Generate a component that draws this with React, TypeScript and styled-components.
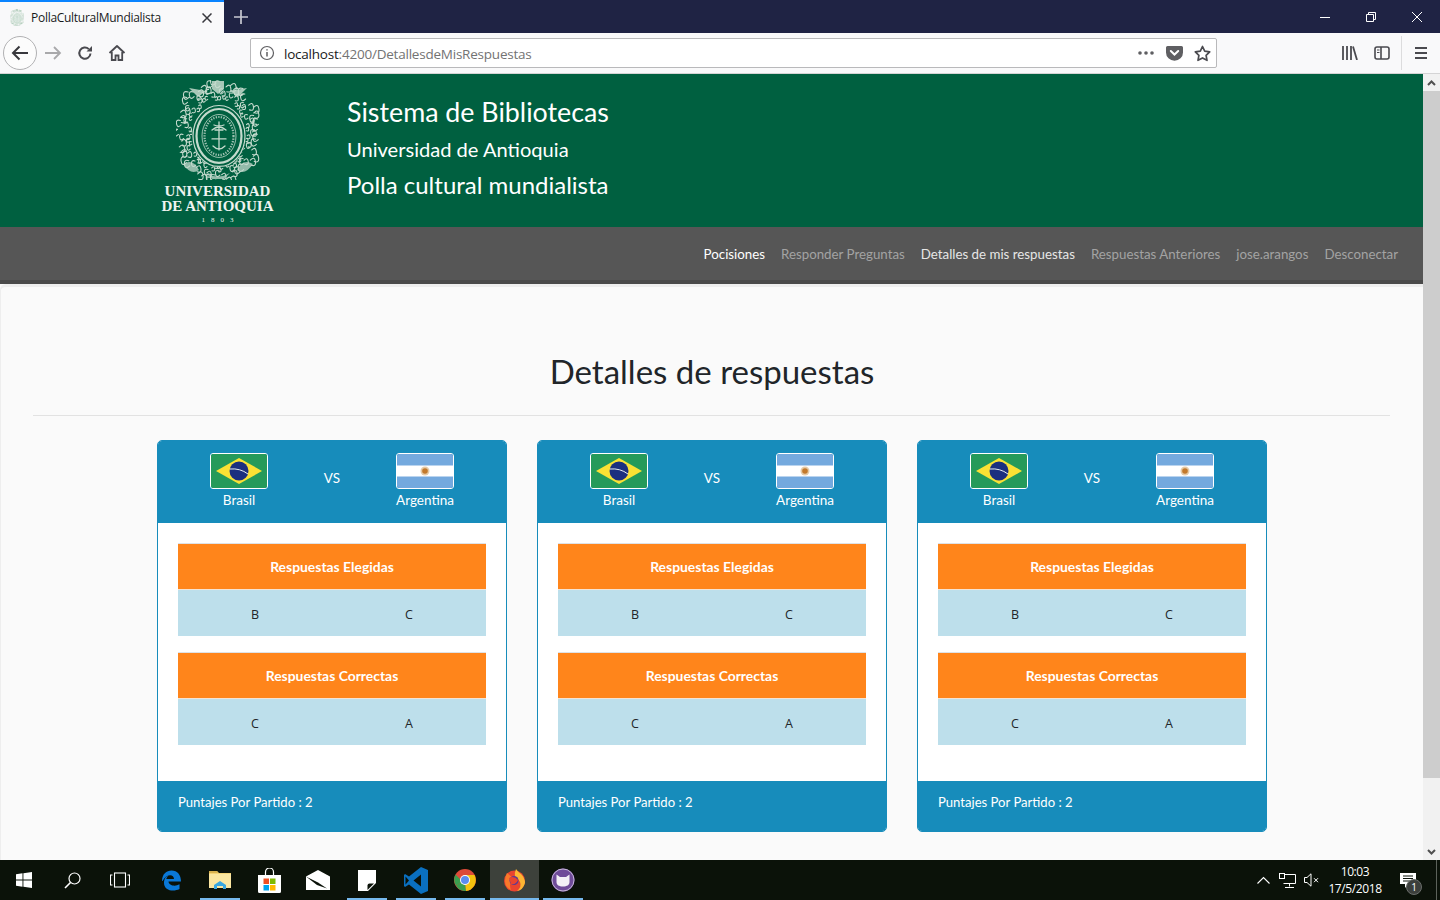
import styled, { createGlobalStyle } from 'styled-components';

const GlobalStyle = createGlobalStyle`
  html, body {
    margin: 0;
    padding: 0;
    height: 100%;
    overflow: hidden;
    background: #fafafa;
  }
  * {
    box-sizing: border-box;
  }
`;

const BODY_FONT = `Lato, "Open Sans", sans-serif`;
const UI_FONT = `"Open Sans", "Noto Sans", sans-serif`;

const Screen = styled.div`
  width: 1440px;
  height: 900px;
  display: flex;
  flex-direction: column;
  overflow: hidden;
`;

/* browser chrome */
const TabStrip = styled.div`
  height: 33px;
  flex: none;
  display: flex;
  background: #1f2344;
`;

const Tab = styled.div`
  width: 224px;
  display: flex;
  align-items: center;
  background: #f9f9fa;
  border-top: 2px solid #0a84ff;
  padding: 0 12px 0 10px;
  font: 12px ${UI_FONT};
  letter-spacing: -0.28px;
  color: #18191a;
`;

const TabTitle = styled.span`
  margin-left: 7px;
  flex: 1;
`;

const NewTab = styled.div`
  width: 34px;
  display: flex;
  align-items: center;
  justify-content: center;
  color: #c8c9d2;
`;

const WindowControls = styled.div`
  margin-left: auto;
  display: flex;
`;

const WindowButton = styled.div`
  width: 46px;
  display: flex;
  align-items: center;
  justify-content: center;
`;

const Toolbar = styled.div`
  height: 41px;
  flex: none;
  display: flex;
  align-items: center;
  padding: 0 3px;
  background: #f9f9fa;
  border-bottom: 1px solid #d4d4d5;
`;

const BackButton = styled.div`
  width: 34px;
  height: 34px;
  border-radius: 50%;
  border: 1px solid #b1b1b3;
  background: #fcfcfc;
  display: flex;
  align-items: center;
  justify-content: center;
`;

const ToolIcon = styled.div`
  width: 32px;
  height: 32px;
  flex: none;
  display: flex;
  align-items: center;
  justify-content: center;
`;

const UrlBar = styled.div`
  margin-left: 117px;
  width: 967px;
  height: 30px;
  display: flex;
  align-items: center;
  background: #fff;
  border: 1px solid #b9b9bb;
  border-radius: 2px;
`;

const UrlInfo = styled.div`
  width: 33px;
  padding-left: 8px;
  display: flex;
  align-items: center;
`;

const UrlText = styled.div`
  flex: 1;
  padding-top: 2px;
  font: 13.5px ${UI_FONT};
  letter-spacing: -0.22px;
  color: #737373;
`;

const UrlHost = styled.span`
  color: #18191a;
`;

const UrlAction = styled.div`
  width: 28px;
  display: flex;
  align-items: center;
  justify-content: center;
`;

const ToolbarRight = styled.div`
  margin-left: auto;
  display: flex;
  align-items: center;
`;

const ToolbarDivider = styled.div`
  width: 1px;
  height: 34px;
  margin: 0 3px;
  background: #dcdcdd;
`;

/* page */
const Viewport = styled.div`
  flex: 1;
  min-height: 0;
  display: flex;
`;

const Page = styled.div`
  flex: 1;
  min-width: 0;
  overflow: hidden;
  display: flex;
  flex-direction: column;
  font-family: ${BODY_FONT};
  background: #fafafa;
`;

const Scrollbar = styled.div`
  width: 17px;
  flex: none;
  display: flex;
  flex-direction: column;
  background: #f1f1f1;
`;

const ScrollArrow = styled.div`
  height: 17px;
  flex: none;
  display: flex;
  align-items: center;
  justify-content: center;
`;

const ScrollThumb = styled.div`
  height: 687px;
  background: #cdcdcd;
`;

const ScrollTrack = styled.div`
  flex: 1;
`;

const Header = styled.header`
  height: 153px;
  flex: none;
  display: flex;
  background: #006040;
  padding-left: 160px;
`;

const LogoBlock = styled.div`
  width: 115px;
  display: flex;
  flex-direction: column;
  align-items: center;
  padding-top: 6px;
  color: #eef4f0;
  font-family: "Liberation Serif", serif;
  font-weight: 700;
`;

const LogoSeal = styled.div`
  height: 104px;
  flex: none;
`;

const LogoLine = styled.div`
  font-size: 15px;
  line-height: 15px;
  white-space: nowrap;
`;

const LogoYear = styled.div`
  font-size: 7px;
  line-height: 13px;
  font-weight: 400;
  letter-spacing: 6px;
  margin-left: 6px;
`;

const HeaderText = styled.div`
  margin-left: 72px;
  padding-top: 20px;
  color: #fff;
`;

const HeaderTitle = styled.div`
  font-size: 26.8px;
  line-height: 37px;
`;

const HeaderSubtitle = styled.div`
  font-size: 20.1px;
  line-height: 36px;
`;

const HeaderApp = styled.div`
  font-size: 24px;
  line-height: 35px;
`;

const Nav = styled.nav`
  height: 57px;
  flex: none;
  display: flex;
  align-items: center;
  justify-content: flex-end;
  gap: 16px;
  padding: 1px 25px 0 0;
  background: #565656;
  border-bottom: 4px solid #4a4a4a;
  font-size: 13.3px;
`;

const NavLink = styled.a<{ $tone: 'on' | 'bright' | 'dim' }>`
  color: ${p => (p.$tone === 'on' ? '#ffffff' : p.$tone === 'bright' ? '#e6e6e6' : '#a3a3a3')};
  white-space: nowrap;
`;

const Content = styled.main`
  flex: 1;
  min-height: 0;
  border-top: 3px solid #eeeeee;
  border-left: 1px solid #eeeeee;
  border-radius: 6px 0 0 0;
`;

const Title = styled.h1`
  margin: 62px 0 22px;
  height: 44px;
  text-align: center;
  font-size: 33px;
  line-height: 44px;
  font-weight: 400;
  color: #212529;
`;

const Rule = styled.hr`
  margin: 0 33px 24px 32px;
  border: 0;
  border-top: 1px solid #e2e2e2;
`;

const Cards = styled.div`
  display: flex;
  justify-content: center;
  gap: 30px;
`;

const Card = styled.section`
  width: 350px;
  border-radius: 5px;
  overflow: hidden;
  border: 1px solid #178cbb;
  background: #fff;
`;

const CardHead = styled.div`
  height: 82px;
  display: grid;
  grid-template-columns: 93px 93px 93px;
  justify-content: center;
  padding-top: 12px;
  background: #178cbb;
  color: #fff;
  font-size: 13.5px;
`;

const Team = styled.div`
  display: flex;
  flex-direction: column;
  align-items: center;
`;

const TeamName = styled.span`
  margin-top: 1px;
  line-height: 20px;
`;

const Versus = styled.span`
  text-align: center;
  line-height: 20px;
  margin-top: 15px;
`;

const FlagFrame = styled.svg`
  display: block;
  width: 58px;
  height: 36px;
  border: 1px solid #fff;
  border-radius: 3px;
`;

const CardBody = styled.div`
  padding: 20px 20px 36px;
`;

const AnswerTable = styled.div`
  & + & {
    margin-top: 16px;
  }
`;

const AnswerHead = styled.div`
  height: 47px;
  display: flex;
  align-items: center;
  justify-content: center;
  background: #ff851b;
  border-top: 1px solid #dee2e6;
  border-bottom: 1px solid #f5e3d3;
  color: #fff;
  font-size: 13.9px;
  font-weight: 700;
`;

const AnswerRow = styled.div`
  height: 46px;
  display: grid;
  grid-template-columns: 1fr 1fr;
  align-items: center;
  padding-top: 2px;
  text-align: center;
  background: #bddfeb;
  color: #212529;
  font: 12.5px ${UI_FONT};
`;

const CardFoot = styled.div`
  height: 50px;
  display: flex;
  align-items: center;
  padding: 0 20px 8px;
  background: #178cbb;
  color: #fff;
  font-size: 13.1px;
`;

/* taskbar */
const Taskbar = styled.div`
  height: 40px;
  flex: none;
  display: flex;
  align-items: stretch;
  background: #0b1209;
  color: #fff;
  font: 12px ${UI_FONT};
`;

const SystemSlot = styled.div`
  width: 48px;
  display: flex;
  align-items: center;
  justify-content: center;
`;

const AppSlots = styled.div`
  margin-left: 2.5px;
  display: flex;
`;

const AppSlot = styled.div<{ $open?: boolean; $active?: boolean }>`
  position: relative;
  width: 49px;
  display: flex;
  align-items: center;
  justify-content: center;
  background: ${p => (p.$active ? '#3d413b' : 'transparent')};

  &::after {
    content: '';
    display: ${p => (p.$open ? 'block' : 'none')};
    position: absolute;
    bottom: 0;
    left: ${p => (p.$active ? '0' : '4.5px')};
    right: ${p => (p.$active ? '0' : '4.5px')};
    height: 2px;
    background: #76b9ed;
  }
`;

const Tray = styled.div`
  margin-left: auto;
  display: flex;
  align-items: center;
`;

const TrayIcon = styled.div`
  width: 24px;
  display: flex;
  justify-content: center;
`;

const Clock = styled.div`
  width: 64px;
  text-align: center;
  font-size: 12px;
  line-height: 17px;
  letter-spacing: -0.4px;
`;

const NoticeSlot = styled.div`
  position: relative;
  width: 40px;
  margin: 0 8px 0 1px;
  display: flex;
  justify-content: center;
`;

const NoticeBadge = styled.span`
  position: absolute;
  left: 18px;
  top: 6px;
  width: 16px;
  height: 16px;
  border-radius: 50%;
  background: #3c3f3c;
  border: 1px solid #6a6d6a;
  font-size: 10px;
  line-height: 14px;
  text-align: center;
  color: #fff;
`;

const ShowDesktop = styled.div`
  width: 1px;
  align-self: stretch;
  margin-right: 3px;
  background: #5c625a;
`;

function Seal({ size, faded }: { size: number; faded?: boolean }) {
  const tone = faded ? '#a5c6b2' : '#c4dacd';
  const core = faded ? '#e4eee8' : '#006040';
  const curls = Array.from({ length: 120 }, (_, i) => {
    const a = (i / 120) * Math.PI * 2;
    const wobble = Math.sin(i * 2.7) * 0.5 + 0.5;
    const rx = 28 + wobble * 13;
    const ry = 34 + wobble * 15;
    const x = 42 + Math.cos(a) * rx;
    const y = 52 + Math.sin(a) * ry;
    const d = (i % 2 === 0 ? 1 : -1) * (2 + wobble * 2.5);
    return `M${x.toFixed(1)} ${y.toFixed(1)}q${d.toFixed(1)} ${(-d).toFixed(1)} ${(d * 1.2).toFixed(1)} ${(d * 0.3).toFixed(1)}t${(-d).toFixed(1)} ${(d * 0.9).toFixed(1)}`;
  }).join('');

  return (
    <svg width={size} height={size * 1.19} viewBox="0 0 84 100" fill="none">
      <path d={curls} stroke={tone} strokeWidth="1.1" strokeLinecap="round" />
      <path d="M36 1h12v8l-6 5-6-5zM13 8l17 3-8 6zM71 8l-17 3 8 6z" fill={tone} opacity="0.85" />
      <path d="M7 84q10-6 16 6q-8 6-16-6zM77 84q-10-6-16 6q8 6 16-6zM30 93q12 7 24 0l-6 6h-12z" fill={tone} opacity="0.75" />
      <ellipse cx="43" cy="56" rx="27" ry="31" fill={core} />
      <ellipse cx="43" cy="56" rx="26" ry="30.500" stroke={tone} strokeWidth="1.200" />
      <ellipse cx="43" cy="56" rx="22.500" ry="27" stroke={tone} strokeWidth="2.200" />
      <ellipse cx="43" cy="56" rx="17" ry="21.500" stroke={tone} strokeWidth="0.800" />
      <ellipse cx="43" cy="56" rx="14.500" ry="19" stroke={tone} strokeWidth="2.200" strokeDasharray="1.300 1.300" opacity="0.8" />
      <path
        d="M43 42v28M36 50q7-6 14 0M37 66q6 6 12 0M39 50h8M36 59h14M38 45q5 2 10 0"
        stroke={tone}
        strokeWidth="1.300"
        strokeLinecap="round"
      />
    </svg>
  );
}

function BrasilFlag() {
  return (
    <FlagFrame viewBox="0 0 56 34" preserveAspectRatio="none">
      <rect width="56" height="34" fill="#259a5a" />
      <path d="M28 4L51 17 28 30 5 17z" fill="#fbe134" />
      <circle cx="28" cy="17" r="9.500" fill="#1c2f7f" />
      <path d="M19 15q10-1 18 5" stroke="#e8edf2" strokeWidth="1" fill="none" />
    </FlagFrame>
  );
}

function ArgentinaFlag() {
  return (
    <FlagFrame viewBox="0 0 56 34" preserveAspectRatio="none">
      <rect width="56" height="34" fill="#74a9de" />
      <rect y="11.500" width="56" height="11" fill="#fff" />
      <circle cx="28" cy="17" r="4.500" fill="#e6cba6" />
      <circle cx="28" cy="17" r="2.800" fill="#c2792c" />
    </FlagFrame>
  );
}

function MatchCard() {
  return (
    <Card>
      <CardHead>
        <Team>
          <BrasilFlag />
          <TeamName>Brasil</TeamName>
        </Team>
        <Versus>VS</Versus>
        <Team>
          <ArgentinaFlag />
          <TeamName>Argentina</TeamName>
        </Team>
      </CardHead>
      <CardBody>
        <AnswerTable>
          <AnswerHead>Respuestas Elegidas</AnswerHead>
          <AnswerRow>
            <span>B</span>
            <span>C</span>
          </AnswerRow>
        </AnswerTable>
        <AnswerTable>
          <AnswerHead>Respuestas Correctas</AnswerHead>
          <AnswerRow>
            <span>C</span>
            <span>A</span>
          </AnswerRow>
        </AnswerTable>
      </CardBody>
      <CardFoot>Puntajes Por Partido : 2</CardFoot>
    </Card>
  );
}

const GREY = '#4a4a4f';

const icons = {
  back: (
    <svg width="20" height="20" viewBox="0 0 20 20" fill="none" stroke="#38383d" strokeWidth="2">
      <path d="M18 10H3M9.500 3.500L3 10l6.500 6.500" />
    </svg>
  ),
  forward: (
    <svg width="18" height="18" viewBox="0 0 18 18" fill="none" stroke="#a9a9ab" strokeWidth="1.800">
      <path d="M1 9h15M10 3l6 6-6 6" />
    </svg>
  ),
  reload: (
    <svg width="16" height="16" viewBox="0 0 16 16" fill="none" stroke={GREY} strokeWidth="2">
      <path d="M13.500 8.500a5.600 5.600 0 1 1-1.700-4.400" />
      <path d="M15 1v5.500H9.500z" fill={GREY} stroke="none" />
    </svg>
  ),
  home: (
    <svg width="18" height="18" viewBox="0 0 18 18" fill="none" stroke={GREY} strokeWidth="1.800">
      <path d="M1.500 9L9 2l7.500 7" strokeLinejoin="round" />
      <path d="M3.800 8v8h3.700v-4.500h3V16h3.700V8" />
    </svg>
  ),
  info: (
    <svg width="16" height="16" viewBox="0 0 16 16" fill="none" stroke="#5f5f62" strokeWidth="1.200">
      <circle cx="8" cy="8" r="6.500" />
      <path d="M8 7v4.500M8 4.200v1.400" strokeWidth="1.500" />
    </svg>
  ),
  dots: (
    <svg width="16" height="4" viewBox="0 0 16 4" fill="#5f5f62">
      <circle cx="2" cy="2" r="1.800" />
      <circle cx="8" cy="2" r="1.800" />
      <circle cx="14" cy="2" r="1.800" />
    </svg>
  ),
  pocket: (
    <svg width="17" height="16" viewBox="0 0 17 16">
      <path d="M1.500 1h14A1.500 1.500 0 0 1 17 2.500V7.500a8.500 8.300 0 0 1-17 0V2.500A1.500 1.500 0 0 1 1.500 1z" fill="#5f5f62" />
      <path d="M4.800 6l3.700 3.500L12.200 6" stroke="#fff" strokeWidth="2" fill="none" strokeLinecap="round" />
    </svg>
  ),
  star: (
    <svg width="17" height="17" viewBox="0 0 17 17" fill="none" stroke={GREY} strokeWidth="1.700" strokeLinejoin="round">
      <path d="M8.500 1.500l2.200 4.600 5 .7-3.600 3.500.9 5-4.500-2.400L4 15.300l.9-5L1.300 6.800l5-.7z" />
    </svg>
  ),
  library: (
    <svg width="16" height="14" viewBox="0 0 16 14" stroke={GREY} strokeWidth="1.800" fill="none">
      <path d="M1 0v14M5 0v14M9 0v14M11 .5l4 13.500" />
    </svg>
  ),
  sidebar: (
    <svg width="16" height="14" viewBox="0 0 16 14" fill="none" stroke={GREY} strokeWidth="1.600">
      <rect x="1" y="1" width="14" height="12" rx="2" />
      <path d="M7 1v12" />
      <path d="M3 4h2.500M3 6.500h2.500" strokeWidth="1.200" />
    </svg>
  ),
  menu: (
    <svg width="12" height="12" viewBox="0 0 12 12" stroke={GREY} strokeWidth="1.800">
      <path d="M0 1h12M0 6h12M0 11h12" />
    </svg>
  ),
  plus: (
    <svg width="14" height="14" viewBox="0 0 14 14" stroke="currentColor" strokeWidth="1.700">
      <path d="M7 0v14M0 7h14" />
    </svg>
  ),
  tabClose: (
    <svg width="10" height="10" viewBox="0 0 10 10" stroke="#38383d" strokeWidth="1.500">
      <path d="M.5.500l9 9M9.500.500l-9 9" />
    </svg>
  ),
  winMin: (
    <svg width="10" height="10" viewBox="0 0 10 10" stroke="#fff">
      <path d="M0 5.500h10" />
    </svg>
  ),
  winRestore: (
    <svg width="10" height="10" viewBox="0 0 10 10" stroke="#fff" fill="none">
      <path d="M.5 2.500h7v7h-7zM2.500 2.500v-2h7v7h-2" />
    </svg>
  ),
  winClose: (
    <svg width="10" height="10" viewBox="0 0 10 10" stroke="#fff">
      <path d="M0 0l10 10M10 0L0 10" />
    </svg>
  ),
  scrollUp: (
    <svg width="9" height="6" viewBox="0 0 9 6" fill="none" stroke="#505050" strokeWidth="2">
      <path d="M1 5l3.500-3.500L8 5" />
    </svg>
  ),
  scrollDown: (
    <svg width="9" height="6" viewBox="0 0 9 6" fill="none" stroke="#505050" strokeWidth="2">
      <path d="M1 1l3.500 3.500L8 1" />
    </svg>
  ),
};

const taskIcons = {
  windows: (
    <svg width="16" height="16" viewBox="0 0 16 16" fill="#fff">
      <path d="M0 2.300L6.500 1.300V7.600H0zM7.400 1.200L16 0V7.600H7.400zM0 8.400h6.500v6.300L0 13.700zM7.400 8.400H16V16l-8.600-1.200z" />
    </svg>
  ),
  search: (
    <svg width="17" height="17" viewBox="0 0 17 17" fill="none" stroke="#fff" strokeWidth="1.200">
      <circle cx="10.500" cy="6.500" r="5.500" />
      <path d="M6.500 10.500L1 16" strokeWidth="1.600" />
    </svg>
  ),
  taskView: (
    <svg width="20" height="16" viewBox="0 0 20 16" fill="none" stroke="#fff" strokeWidth="1.100">
      <rect x="4.500" y="1" width="11" height="14" />
      <path d="M2.500 3H.5v10h2M17.500 3h2v10h-2" />
    </svg>
  ),
  edge: (
    <svg width="20" height="21" viewBox="0 0 20 21" fill="none">
      <path
        d="M1 11C1 4 5.500.500 10.500.500 16.500.500 20 5 20 11.500H7.500c.3 4 6.500 5.500 11 2.800v4.700c-6 3-16 1.800-15.500-7 .200-3.500 2-5.500 4.500-6.500-1.500 1.500-2 2.500-2.200 3.500h7.700c0-5-7.500-5.500-11.500 2z"
        fill="#0a78d7"
      />
    </svg>
  ),
  explorer: (
    <svg width="22" height="20" viewBox="0 0 22 20">
      <path d="M0 1h8l2 2h12v15H0z" fill="#f5d477" />
      <path d="M0 4h22v14H0z" fill="#fbe6a0" />
      <path d="M0 1h8l1 2H0z" fill="#d9b24e" />
      <path d="M5 19v-4l6-4 6 4v4h-3v-3H8v3z" fill="#3aa7e0" />
    </svg>
  ),
  store: (
    <svg width="23" height="25" viewBox="0 0 23 25">
      <path d="M7.500 7V4a4 4 0 0 1 8 0v3" fill="none" stroke="#fff" strokeWidth="1.200" />
      <path d="M0 7h23v16.500a1.500 1.500 0 0 1-1.500 1.500h-20A1.500 1.500 0 0 1 0 23.500z" fill="#fff" />
      <rect x="5.500" y="10.500" width="5.500" height="5.500" fill="#f25022" />
      <rect x="12" y="10.500" width="5.500" height="5.500" fill="#7fba00" />
      <rect x="5.500" y="17" width="5.500" height="5.500" fill="#00a4ef" />
      <rect x="12" y="17" width="5.500" height="5.500" fill="#ffb900" />
    </svg>
  ),
  mail: (
    <svg width="24" height="20" viewBox="0 0 24 20">
      <path d="M0 6.500L12 0l12 6.500V20H0z" fill="#fff" />
      <path d="M0 6.500l12 6 9 6-10-3.500z" fill="#0b1209" />
      <path d="M1 6.500L12 1l11 5.500L12 11.500z" fill="#fff" />
    </svg>
  ),
  sticky: (
    <svg width="18" height="21" viewBox="0 0 18 21">
      <path d="M0 0h18v13l-8 8H0z" fill="#fff" />
      <path d="M16 13.500L9.500 20v-4.500a2 2 0 0 1 2-2z" fill="#0b1209" />
    </svg>
  ),
  vscode: (
    <svg width="24" height="27" viewBox="0 0 24 27">
      <path d="M17 0l7 3v21l-7 3L5 17.500 1 20 0 19V8l1-1 4 2.500zM17 7.500L9.500 13.500 17 19.500z" fill="#0a70c0" />
      <path d="M1.500 9.500L5 13.500 1.500 17.500z" fill="#0b1209" />
    </svg>
  ),
  chrome: (
    <svg width="22" height="22" viewBox="0 0 22 22">
      <circle cx="11" cy="11" r="11" fill="#dd4b39" />
      <path d="M11 11L2 16.500A11 11 0 0 0 12 22z" fill="#3a9e4e" />
      <path d="M11 6h9.500a11 11 0 0 1-8.500 16L11 11z" fill="#f4c20d" />
      <path d="M11 11L2 16.500A11 11 0 0 1 1.500 5.500L7 11z" fill="#3a9e4e" />
      <circle cx="11" cy="11" r="5" fill="#fff" />
      <circle cx="11" cy="11" r="4" fill="#5b8df0" />
    </svg>
  ),
  firefox: (
    <svg width="23" height="23" viewBox="0 0 23 23">
      <circle cx="11.500" cy="12" r="10.500" fill="#e8442f" />
      <path d="M4 4q-2 4-2 8a10 10 0 0 0 6 9q-3-8 3-11z" fill="#f9792a" />
      <path d="M13 0q2 3 5 5 4 4 4 9-2 7-8 8 5-4 3-9-3-5-5-4-1-5 1-9z" fill="#fcb533" />
      <circle cx="11" cy="11.500" r="4.500" fill="#5b3a94" />
      <path d="M6 9q5-3 9 2-2 5-7 4z" fill="#e8442f" />
    </svg>
  ),
  cat: (
    <svg width="24" height="24" viewBox="0 0 24 24">
      <circle cx="12" cy="12" r="11.500" fill="#6f4b99" />
      <circle cx="12" cy="12" r="11" fill="none" stroke="#c5b5d8" strokeWidth="1" />
      <path d="M5.500 6.500L9 9h6l3.500-2.500V14c0 3-2.500 4.500-6.500 4.500S5.500 17 5.500 14z" fill="#f3f0f6" />
    </svg>
  ),
};

const trayIcons = {
  chevron: (
    <svg width="13" height="8" viewBox="0 0 13 8" fill="none" stroke="#fff" strokeWidth="1.100">
      <path d="M.500 7.500l6-6 6 6" />
    </svg>
  ),
  network: (
    <svg width="17" height="15" viewBox="0 0 17 15" fill="none" stroke="#fff">
      <path d="M4.500 1.500h12v9H4.500M10.500 10.500v3M6 14.500h9" />
      <rect x=".5" y=".5" width="5" height="5" fill="#0b1209" />
    </svg>
  ),
  speaker: (
    <svg width="15" height="14" viewBox="0 0 15 14" fill="none" stroke="#fff">
      <path d="M.5 4.500h2.500L7 .8v12.400L3 9.500H.5z" />
      <path d="M10 5.200l4 4M14 5.200l-4 4" />
    </svg>
  ),
  notice: (
    <svg width="16" height="15" viewBox="0 0 16 15">
      <path d="M0 0h16v11H8l-3 4v-4H0z" fill="#fff" />
      <path d="M3 3h10M3 5.500h10M3 8h7" stroke="#0b1209" />
    </svg>
  ),
};

const navLinks: { label: string; tone: 'on' | 'bright' | 'dim' }[] = [
  { label: 'Pocisiones', tone: 'on' },
  { label: 'Responder Preguntas', tone: 'dim' },
  { label: 'Detalles de mis respuestas', tone: 'bright' },
  { label: 'Respuestas Anteriores', tone: 'dim' },
  { label: 'jose.arangos', tone: 'dim' },
  { label: 'Desconectar', tone: 'dim' },
];

export default function App() {
  return (
    <Screen>
      <GlobalStyle />
      <TabStrip>
        <Tab>
          <Seal size={14} faded />
          <TabTitle>PollaCulturalMundialista</TabTitle>
          {icons.tabClose}
        </Tab>
        <NewTab>{icons.plus}</NewTab>
        <WindowControls>
          <WindowButton>{icons.winMin}</WindowButton>
          <WindowButton>{icons.winRestore}</WindowButton>
          <WindowButton>{icons.winClose}</WindowButton>
        </WindowControls>
      </TabStrip>
      <Toolbar>
        <BackButton>{icons.back}</BackButton>
        <ToolIcon>{icons.forward}</ToolIcon>
        <ToolIcon>{icons.reload}</ToolIcon>
        <ToolIcon>{icons.home}</ToolIcon>
        <UrlBar>
          <UrlInfo>{icons.info}</UrlInfo>
          <UrlText>
            <UrlHost>localhost</UrlHost>:4200/DetallesdeMisRespuestas
          </UrlText>
          <UrlAction>{icons.dots}</UrlAction>
          <UrlAction>{icons.pocket}</UrlAction>
          <UrlAction>{icons.star}</UrlAction>
        </UrlBar>
        <ToolbarRight>
          <ToolIcon>{icons.library}</ToolIcon>
          <ToolIcon>{icons.sidebar}</ToolIcon>
          <ToolbarDivider />
          <ToolIcon>{icons.menu}</ToolIcon>
        </ToolbarRight>
      </Toolbar>
      <Viewport>
        <Page>
          <Header>
            <LogoBlock>
              <LogoSeal>
                <Seal size={84} />
              </LogoSeal>
              <LogoLine>UNIVERSIDAD</LogoLine>
              <LogoLine>DE ANTIOQUIA</LogoLine>
              <LogoYear>1803</LogoYear>
            </LogoBlock>
            <HeaderText>
              <HeaderTitle>Sistema de Bibliotecas</HeaderTitle>
              <HeaderSubtitle>Universidad de Antioquia</HeaderSubtitle>
              <HeaderApp>Polla cultural mundialista</HeaderApp>
            </HeaderText>
          </Header>
          <Nav>
            {navLinks.map(link => (
              <NavLink key={link.label} $tone={link.tone}>
                {link.label}
              </NavLink>
            ))}
          </Nav>
          <Content>
            <Title>Detalles de respuestas</Title>
            <Rule />
            <Cards>
              <MatchCard />
              <MatchCard />
              <MatchCard />
            </Cards>
          </Content>
        </Page>
        <Scrollbar>
          <ScrollArrow>{icons.scrollUp}</ScrollArrow>
          <ScrollThumb />
          <ScrollTrack />
          <ScrollArrow>{icons.scrollDown}</ScrollArrow>
        </Scrollbar>
      </Viewport>
      <Taskbar>
        <SystemSlot>{taskIcons.windows}</SystemSlot>
        <SystemSlot>{taskIcons.search}</SystemSlot>
        <SystemSlot>{taskIcons.taskView}</SystemSlot>
        <AppSlots>
          <AppSlot>{taskIcons.edge}</AppSlot>
          <AppSlot $open>{taskIcons.explorer}</AppSlot>
          <AppSlot>{taskIcons.store}</AppSlot>
          <AppSlot>{taskIcons.mail}</AppSlot>
          <AppSlot $open>{taskIcons.sticky}</AppSlot>
          <AppSlot $open>{taskIcons.vscode}</AppSlot>
          <AppSlot $open>{taskIcons.chrome}</AppSlot>
          <AppSlot $open $active>{taskIcons.firefox}</AppSlot>
          <AppSlot $open>{taskIcons.cat}</AppSlot>
        </AppSlots>
        <Tray>
          <TrayIcon>{trayIcons.chevron}</TrayIcon>
          <TrayIcon>{trayIcons.network}</TrayIcon>
          <TrayIcon>{trayIcons.speaker}</TrayIcon>
          <Clock>
            10:03
            <br />
            17/5/2018
          </Clock>
          <NoticeSlot>
            {trayIcons.notice}
            <NoticeBadge>1</NoticeBadge>
          </NoticeSlot>
          <ShowDesktop />
        </Tray>
      </Taskbar>
    </Screen>
  );
}
